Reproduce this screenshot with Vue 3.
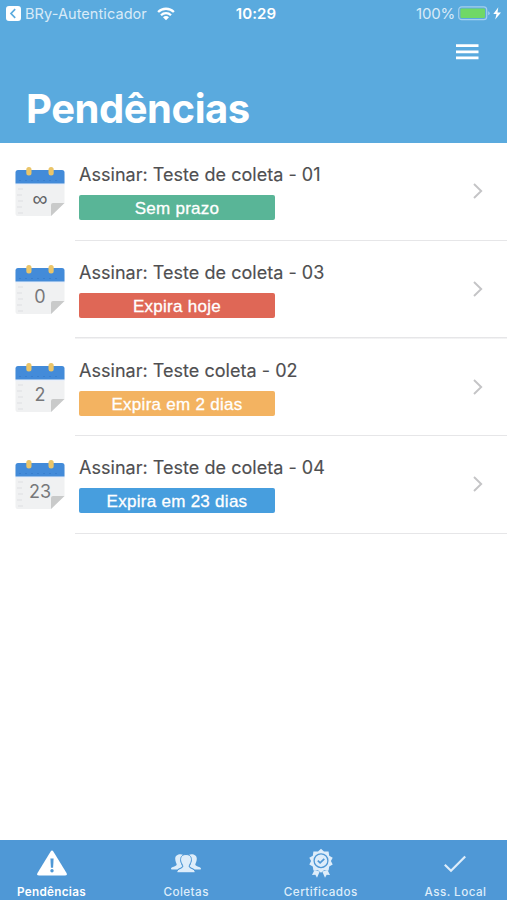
<script setup>
const items = [
  { day: '∞', title: 'Assinar: Teste de coleta - 01', status: 'Sem prazo', tone: 'green' },
  { day: '0', title: 'Assinar: Teste de coleta - 03', status: 'Expira hoje', tone: 'red' },
  { day: '2', title: 'Assinar: Teste coleta - 02', status: 'Expira em 2 dias', tone: 'orange' },
  { day: '23', title: 'Assinar: Teste de coleta - 04', status: 'Expira em 23 dias', tone: 'blue' },
]
</script>

<template>
  <div class="screen">
    <header class="header">
      <div class="status-bar">
        <div class="back">
          <svg width="15" height="15" viewBox="0 0 15 15">
            <rect width="15" height="15" rx="3" fill="#fff" />
            <path d="M9.2 3.2 5 7.500l4.200 4.300" fill="none" stroke="#5aaade" stroke-width="1.700" />
          </svg>
          <span class="app-name">BRy-Autenticador</span>
          <svg class="wifi" width="18" height="14" viewBox="0 0 18 14" fill="none" stroke="#fff" stroke-width="2.300">
            <path d="M1.100 5a11.200 11.200 0 0 1 15.800 0M4 8.200a7.100 7.100 0 0 1 10 0" />
            <path d="M9 13.200 6 10.300a4.200 4.200 0 0 1 6 0Z" fill="#fff" stroke="none" />
          </svg>
        </div>
        <span class="clock">10:29</span>
        <div class="power">
          <span class="percent">100%</span>
          <svg width="44" height="15" viewBox="0 0 44 15">
            <rect x=".7" y=".8" width="28" height="12.900" rx="3" fill="none" stroke="#a5cfed" stroke-width="1.200" />
            <rect x="2.400" y="2.400" width="24.700" height="9.700" rx="1.300" fill="#70d866" />
            <path d="M30.200 5.300q1.500.4 1.500 2t-1.500 2Z" fill="#a5cfed" />
            <path d="M40.300 1.300 35.300 8h3.200l-1.300 5.500L43 6.500h-3.500Z" fill="#fff" />
          </svg>
        </div>
      </div>
      <svg class="menu" width="23" height="16" viewBox="0 0 23 16" stroke="#fff" stroke-width="2.700">
        <path d="M0 1.600h22.500M0 7.800h22.500M0 13.900h22.500" />
      </svg>
      <h1 class="heading">Pendências</h1>
    </header>

    <main class="list">
      <article v-for="item in items" :key="item.title" class="item">
        <div class="calendar">
          <svg width="50" height="50" viewBox="0 0 50 50">
            <path d="M.5 7h49v29L36 49H2.500q-2 0-2-2Z" fill="#f0f1f2" />
            <path d="M.5 16.500h49v1.400H.5Z" fill="#e9effa" />
            <path d="M3 22h5M2 28h5M3 34h5M2 40h5M3 46h5" stroke="#e3e5e7" stroke-width="1.300" />
            <path d="M.5 16.500v-11q0-2.500 2.500-2.500h44q2.500 0 2.500 2.500v11Z" fill="#438bd9" />
            <path d="M4 13.500h41" stroke="#397fce" stroke-dasharray="2 4" />
            <path d="M36 49V38q0-2 2-2h11.500Z" fill="#c9caca" />
            <rect x="11.300" y="0" width="5.200" height="8.500" rx="2.500" fill="#ebc568" />
            <rect x="33.500" y="0" width="5.200" height="8.500" rx="2.500" fill="#ebc568" />
          </svg>
          <span class="day" :class="{ infinite: item.day === '∞' }">{{ item.day }}</span>
        </div>
        <div class="details">
          <div class="title">{{ item.title }}</div>
          <div class="badge" :class="item.tone">{{ item.status }}</div>
        </div>
        <svg class="chevron" width="10" height="16" viewBox="0 0 10 16">
          <path d="m1 1 7.200 7L1 15" fill="none" stroke="#c4c4c6" stroke-width="1.900" />
        </svg>
      </article>
    </main>

    <nav class="tabs">
      <div class="tab active">
        <svg width="32" height="32" viewBox="0 0 32 32">
          <path d="M14.500 3.700q1.500-2.400 3 0l13 21.300q1.300 2.500-1.500 2.500H3q-2.800 0-1.500-2.500Z" fill="#fff" />
          <path d="M14.400 10.500h3.200l-.5 9.200h-2.200Z" fill="#4f98d6" />
          <circle cx="16" cy="22.800" r="1.700" fill="#4f98d6" />
        </svg>
        <span>Pendências</span>
      </div>
      <div class="tab">
        <svg width="32" height="32" viewBox="0 0 32 32" fill="#deedfa">
          <path d="M10.500 6.200c2 0 3 .7 3.500 1.800-3.700 1.200-3.800 5-2.700 8 .4 1 .8 1.500.7 2.500-.2 1.300-3 1.500-4.500 3H2c-.6 0-1-.2-1-.8 0-2 5.500-2.200 5.700-4 .1-1.200-1.500-3-1.500-6 0-2.800 2.200-4.500 5.300-4.500Z" />
          <path d="M21.500 6.200c-2 0-3 .7-3.500 1.800 3.700 1.200 3.800 5 2.700 8-.4 1-.8 1.500-.7 2.500.2 1.300 3 1.500 4.500 3H30c.6 0 1-.2 1-.8 0-2-5.500-2.200-5.700-4-.1-1.200 1.500-3 1.500-6 0-2.800-2.200-4.500-5.300-4.500Z" />
          <path d="M16 6.500c-4.200 0-6 3-5.300 6.500.5 2.400 2.100 3.900 2.100 5.400 0 2.200-5.700 1.900-5.900 5.300 0 .8.400 1.100 1.100 1.100h16c.7 0 1.100-.3 1.100-1.100-.2-3.400-5.900-3.100-5.900-5.300 0-1.500 1.600-3 2.100-5.400.7-3.500-1.100-6.500-5.300-6.500Z" stroke="#4f98d6" stroke-width="1" />
        </svg>
        <span>Coletas</span>
      </div>
      <div class="tab">
        <svg width="32" height="32" viewBox="0 0 32 32">
          <path d="m9.500 22-2.500 5 3.300-.2 1.700 2.900 2.700-6.100M22.500 22l2.500 5-3.300-.2-1.700 2.900-2.700-6.100" fill="#deedfa" />
          <path d="m16 .8 3 2.700 4.600-.1.600 4.300 3.500 2-1.800 3.300 1.800 3.500-3.500 2-.6 4-4.600-.2-3 2.500-3-2.500-4.600.2-.6-4-3.500-2L6.100 13 4.300 9.700l3.500-2 .6-4.300 4.600.1Z" fill="#deedfa" />
          <circle cx="16" cy="12.700" r="6.900" fill="none" stroke="#4f98d6" stroke-width="1.300" />
          <path d="m12.800 12.700 2.300 2.200 4.200-4" fill="none" stroke="#4f98d6" stroke-width="1.700" />
        </svg>
        <span>Certificados</span>
      </div>
      <div class="tab">
        <svg width="32" height="32" viewBox="0 0 32 32" fill="none" stroke="#deedfa" stroke-width="2.200">
          <path d="m5.800 16.800 6.200 6L26.200 8.500" />
        </svg>
        <span>Ass. Local</span>
      </div>
    </nav>
  </div>
</template>

<style>
body {
  margin: 0;
  background: #fff;
}
</style>

<style scoped>
.screen {
  width: 507px;
  height: 900px;
  display: flex;
  flex-direction: column;
  overflow: hidden;
  background: #fff;
  font-family: Inter, "Liberation Sans", sans-serif;
}
svg {
  display: block;
  flex: none;
}
.header {
  box-sizing: border-box;
  height: 143px;
  flex: none;
  display: flex;
  flex-direction: column;
  background: #5aaade;
  color: #fff;
}
.status-bar {
  display: grid;
  grid-template-columns: 1fr auto 1fr;
  align-items: center;
  height: 27px;
  padding: 0 5px 0 6px;
  font-size: 15px;
}
.back,
.power {
  display: flex;
  align-items: center;
}
.app-name {
  margin-left: 4px;
  color: #d9ebf8;
  font-size: 14.5px;
  letter-spacing: 0.08px;
}
.wifi {
  margin-left: 10px;
}
.clock {
  padding-left: 4px;
  font-weight: 600;
  letter-spacing: 0.15px;
}
.power {
  justify-content: flex-end;
  gap: 3px;
}
.percent {
  color: #d9ebf8;
  letter-spacing: -0.2px;
}
.menu {
  align-self: flex-end;
  margin: 17px 28px 0 0;
}
.heading {
  margin: 24px 0 0 26px;
  font-size: 40px;
  line-height: 50px;
  font-weight: 700;
  letter-spacing: -0.45px;
}
.list {
  flex: 1;
}
.item {
  box-sizing: border-box;
  height: 97.7px;
  display: flex;
  align-items: flex-start;
  padding: 22px 24px 0 15px;
  background: linear-gradient(#e6e6e8, #e6e6e8) 75px 100% / 432px 1.5px no-repeat;
}
.item:first-child {
  height: 98px;
}
.calendar {
  display: grid;
  width: 50px;
  height: 50px;
  margin-top: 2px;
}
.calendar > * {
  grid-area: 1 / 1;
}
.day {
  z-index: 1;
  padding-top: 21px;
  text-align: center;
  font-size: 18px;
  line-height: 22px;
  color: #77787a;
}
.infinite {
  font-family: "Liberation Sans", sans-serif;
  font-size: 21px;
  color: #606165;
}
.details {
  margin-left: 14px;
}
.title {
  height: 30px;
  font-size: 18px;
  line-height: 20px;
  color: #4f4f51;
  letter-spacing: 0.03px;
  white-space: nowrap;
  -webkit-text-stroke: 0.15px #4f4f51;
}
.badge {
  width: 196px;
  height: 25px;
  border-radius: 2px;
  color: #fff;
  text-align: center;
  font-family: "Liberation Sans", sans-serif;
  font-size: 17px;
  line-height: 27px;
  letter-spacing: 0.28px;
  -webkit-text-stroke: 0.3px #fff;
}
.green {
  background: #59b597;
}
.red {
  background: #df6756;
}
.orange {
  background: #f3b361;
}
.blue {
  background: #479ede;
}
.chevron {
  margin: 18px 0 0 auto;
}
.tabs {
  height: 60px;
  flex: none;
  display: flex;
  justify-content: space-between;
  background: #4f98d6;
}
.tab {
  width: 103px;
  display: flex;
  flex-direction: column;
  align-items: center;
  padding-top: 8px;
  gap: 4px;
  color: #deedfa;
  font-size: 11.7px;
  line-height: 17px;
  font-weight: 500;
  letter-spacing: 0.45px;
}
.active {
  color: #fff;
  font-weight: 600;
  letter-spacing: 0.3px;
}
</style>
